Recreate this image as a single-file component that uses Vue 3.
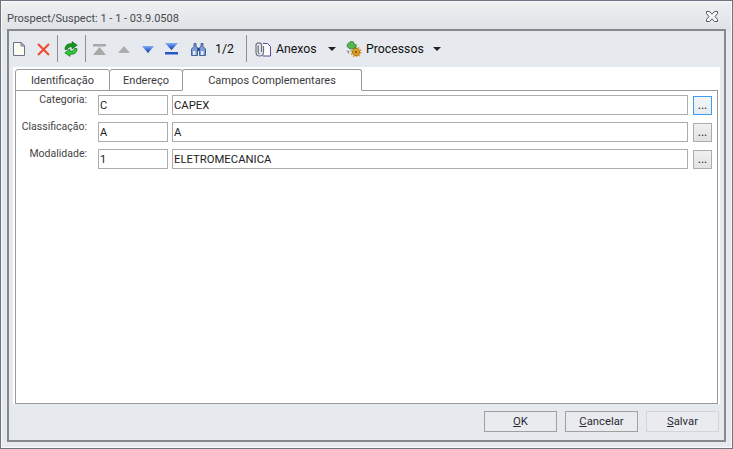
<script setup>
const rows = [
  { label: 'Categoria:', code: 'C', text: 'CAPEX', active: true },
  { label: 'Classificação:', code: 'A', text: 'A', active: false },
  { label: 'Modalidade:', code: '1', text: 'ELETROMECANICA', active: false },
]
</script>

<template>
  <div class="window">
    <div class="titlebar">
      <span class="title">Prospect/Suspect: 1 - 1 - 03.9.0508</span>
      <svg class="close" width="12" height="11" viewBox="0 0 12 11">
        <path d="M.5.5h3L6 3.200 8.500.5h3v2L9 5.500l2.500 3v2h-3L6 7.800l-2.500 2.700h-3v-2L3 5.500l-2.500-3z" fill="#f7f8f9" stroke="#50575f" stroke-width="1"/>
      </svg>
    </div>
    <div class="frame">
      <div class="toolbar">
        <svg class="i-new" width="12" height="14" viewBox="0 0 12 14">
          <path d="M.5.5h7.500l3.500 3.500v9.500H.5z" fill="#fbfbf0" stroke="#6a7390"/>
          <path d="M8 .5v3.500h3.500z" fill="#d5dae4" stroke="#6a7390"/>
        </svg>
        <svg class="i-del" width="13" height="13" viewBox="0 0 13 13">
          <path d="M1 1l11 11M12 1L1 12" stroke="#f2492e" stroke-width="2.100" fill="none"/>
        </svg>
        <span class="sep s1"></span>
        <svg class="i-ref" width="14" height="16" viewBox="0 0 14 16">
          <path d="M1 8.500C.8 4 4 2.300 8 2.700V.6l5.200 3.600L8 8V5.800C5.500 5.600 3.800 6.500 3.600 8.500z" fill="#0f9a1c" stroke="#0a5c16" stroke-width=".6"/>
          <path d="M13 7.500c.2 4.500-3 6.200-7 5.800v2.100L.8 11.800 6 8v2.200c2.500.2 4.200-.7 4.400-2.700z" fill="#2ecb34" stroke="#0a5c16" stroke-width=".6"/>
        </svg>
        <span class="sep s2"></span>
        <svg class="i-top" width="13" height="11" viewBox="0 0 13 11">
          <path d="M0 0h13v2.500H0z" fill="#a8a8a8"/><path d="M6.500 3L13 11H0z" fill="#a8a8a8"/>
        </svg>
        <svg class="i-up" width="12" height="7" viewBox="0 0 12 7"><path d="M6 0l6 7H0z" fill="#acacac"/></svg>
        <svg class="i-down" width="12" height="7" viewBox="0 0 12 7">
          <defs><linearGradient id="bl" x1="0" y1="0" x2="0" y2="1"><stop offset="0" stop-color="#86aef0"/><stop offset=".5" stop-color="#3f6fdc"/><stop offset="1" stop-color="#10308f"/></linearGradient></defs>
          <path d="M0 0h12L6 7z" fill="url(#bl)"/>
        </svg>
        <svg class="i-bot" width="13" height="12" viewBox="0 0 13 12">
          <path d="M0 0h13L6.500 7z" fill="url(#bl)"/><path d="M0 9h13v2.500H0z" fill="#2b58c8"/>
        </svg>
        <svg class="i-bin" width="15" height="13" viewBox="0 0 15 13">
          <path d="M3 .5h2v3l1.500 1V12.500H.5V6L3 3.500zM10 .5h2v3L14.500 6v6.500H8.500V4.500l1.500-1z" fill="#7c9cd6" stroke="#2b4a86" stroke-width=".8"/>
          <path d="M6.500 5h2v3h-2z" fill="#2b4a86"/>
          <path d="M2 8h2.500v4H2zM10 8h2.500v4H10z" fill="#e2ecf9"/>
        </svg>
        <span class="count">1/2</span>
        <span class="sep s3"></span>
        <svg class="i-clip" width="17" height="15" viewBox="0 0 17 15">
          <path d="M8 1.500h4.500l3 3v9.500H8" fill="#fbfbfb" stroke="#5b4aa0" stroke-width="1"/>
          <path d="M6.500 10V3.200C6.500 1.600 5.500.8 4 .8S1 1.600 1 3.200V10c0 2.500 1.500 4 3.700 4S8.500 12.500 8.500 10V4M3.200 3.500V10c0 1 .5 1.800 1.400 1.800" fill="none" stroke="#6d7480" stroke-width="1.200"/>
        </svg>
        <span class="tool-label anexos">Anexos</span>
        <span class="caret c1"></span>
        <svg class="i-proc" width="16" height="16" viewBox="0 0 16 16">
          <circle cx="10" cy="11" r="3.600" fill="#e8aa20" stroke="#a86d10" stroke-width="1"/>
          <circle cx="10" cy="11" r="4.800" fill="none" stroke="#d8951a" stroke-width="1.400" stroke-dasharray="1.500 1.500"/>
          <circle cx="10" cy="11" r="1.300" fill="#7a5a20"/>
          <path d="M4.500.5l2.800.3.700 2.200 2.200.8L10 6.500 7 7.500 4 8 1 5.500 1.500 3z" fill="#55b84e" stroke="#27702a" stroke-width=".7"/>
          <path d="M.5 9l3 1.500L2.500 13z" fill="#7d8aa0"/>
        </svg>
        <span class="tool-label processos">Processos</span>
        <span class="caret c2"></span>
      </div>

      <div class="sheet">
        <div class="tabs">
          <div class="tab t1">Identificação</div>
          <div class="tab t2">Endereço</div>
          <div class="tab t3">Campos Complementares</div>
        </div>
        <div class="panel">
          <div v-for="r in rows" :key="r.label" class="row">
            <label class="lbl">{{ r.label }}</label>
            <div class="field code">{{ r.code }}</div>
            <div class="field desc">{{ r.text }}</div>
            <button class="more" :class="{ active: r.active }" type="button">...</button>
          </div>
        </div>
      </div>

      <div class="footer">
        <button class="btn" type="button"><u>O</u>K</button>
        <button class="btn" type="button"><u>C</u>ancelar</button>
        <button class="btn off" type="button"><u>S</u>alvar</button>
      </div>
    </div>
  </div>
</template>

<style>
html, body { margin: 0; padding: 0; background: #e6e9ee; }
</style>

<style scoped>
.window {
  width: 733px;
  height: 449px;
  box-sizing: border-box;
  border: 1px solid #6c7680;
  box-shadow: inset 0 0 0 1px #f8f9fa;
  background: linear-gradient(#eef0f2 0, #dfe2e6 29px, #e6e9ee 30px);
  font-family: Roboto, "Open Sans", sans-serif;
  font-size: 11px;
  color: #2c2c34;
  display: flex;
  flex-direction: column;
  padding: 0 6px 6px;
}
.titlebar {
  height: 28px;
  flex: none;
  display: flex;
  align-items: center;
  justify-content: space-between;
  padding-top: 6px;
  box-sizing: border-box;
}
.title { font-size: 11px; color: #45484d; }
.close { margin-right: 8px; margin-top: -3px; }
.frame {
  flex: 1;
  border: 2px solid #85898d;
  background: #e6e9ee;
  display: flex;
  flex-direction: column;
  padding: 0 4px;
  min-height: 0;
}
.toolbar {
  height: 36px;
  flex: none;
  display: flex;
  align-items: center;
  font-size: 12.300px;
  color: #111;
}
.sep { width: 1px; height: 27px; background: #8b8e92; flex: none; margin-top: -1px; }
.i-del { margin-left: 12px; }
.s1 { margin-left: 7px; }
.i-ref { margin-left: 6px; }
.s2 { margin-left: 7px; }
.i-top { margin-left: 7px; }
.i-up { margin-left: 12px; }
.i-down { margin-left: 12px; }
.i-bot { margin-left: 11px; }
.i-bin { margin-left: 13px; }
.count { margin-left: 9px; width: 20px; }
.s3 { margin-left: 11px; }
.i-clip { margin-left: 8px; }
.anexos { margin-left: 4px; width: 41px; }
.caret {
  width: 0; height: 0;
  border-left: 4px solid transparent;
  border-right: 4px solid transparent;
  border-top: 4px solid #222;
  flex: none;
}
.c1 { margin-left: 11px; }
.i-proc { margin-left: 10px; }
.processos { margin-left: 4px; width: 58px; }
.c2 { margin-left: 9px; }

.sheet {
  height: 337px;
  flex: none;
  background: #fff;
  padding: 2px 2px 0;
  box-sizing: border-box;
  display: flex;
  flex-direction: column;
}
.tabs {
  display: flex;
  height: 21px;
  flex: none;
  position: relative;
  z-index: 1;
}
.tab {
  box-sizing: border-box;
  height: 22px;
  border: 1px solid #9a9a9a;
  border-radius: 3px 3px 0 0;
  background: #fff;
  display: flex;
  align-items: center;
  justify-content: center;
  font-size: 11px;
  color: #3a3a40;
}
.t1 { width: 95px; }
.t2 { width: 74px; margin-left: -1px; }
.t3 { width: 180px; margin-left: -1px; border-bottom-color: #fff; }
.panel {
  height: 314px;
  flex: none;
  box-sizing: border-box;
  border: 1px solid #9a9a9a;
  padding-top: 4px;
  display: flex;
  flex-direction: column;
  gap: 7px;
}
.row {
  display: grid;
  grid-template-columns: 78px 70px 516px 19px;
  grid-template-rows: 20px;
  column-gap: 4px;
  height: 20px;
  align-items: stretch;
}
.lbl {
  text-align: right;
  line-height: 9px;
  font-size: 10.500px;
  color: #444;
  white-space: nowrap;
  margin-right: 7px;
}
.field {
  box-sizing: border-box;
  height: 20px;
  border: 1px solid #acacac;
  background: #fff;
  line-height: 16px;
  padding: 2px 0 0 1px;
  font-size: 11px;
  color: #222;
}
.desc { font-size: 11.300px; }
.more {
  box-sizing: border-box;
  width: 19px;
  height: 19px;
  margin: 1px 0 0 1px;
  padding: 0;
  border: 1px solid #acacac;
  background: linear-gradient(#f0f0f0, #e2e2e2);
  font-family: inherit;
  font-size: 12px;
  line-height: 17px;
  color: #222;
}
.more.active { border-color: #3e9bf2; background: linear-gradient(#f4f6f8, #e6ebf0); }

.footer {
  height: 38px;
  flex: none;
  display: flex;
  justify-content: flex-end;
  gap: 8px;
  padding-top: 7px;
  padding-right: 1px;
  box-sizing: border-box;
}
.btn {
  width: 73px;
  height: 21px;
  box-sizing: border-box;
  padding: 0;
  border: 1px solid #a0a0a0;
  background: #e9ebef;
  font-family: inherit;
  font-size: 11.300px;
  line-height: 19px;
  color: #2c2c34;
}
.btn.off { border-color: #d2d4d7; }
</style>
